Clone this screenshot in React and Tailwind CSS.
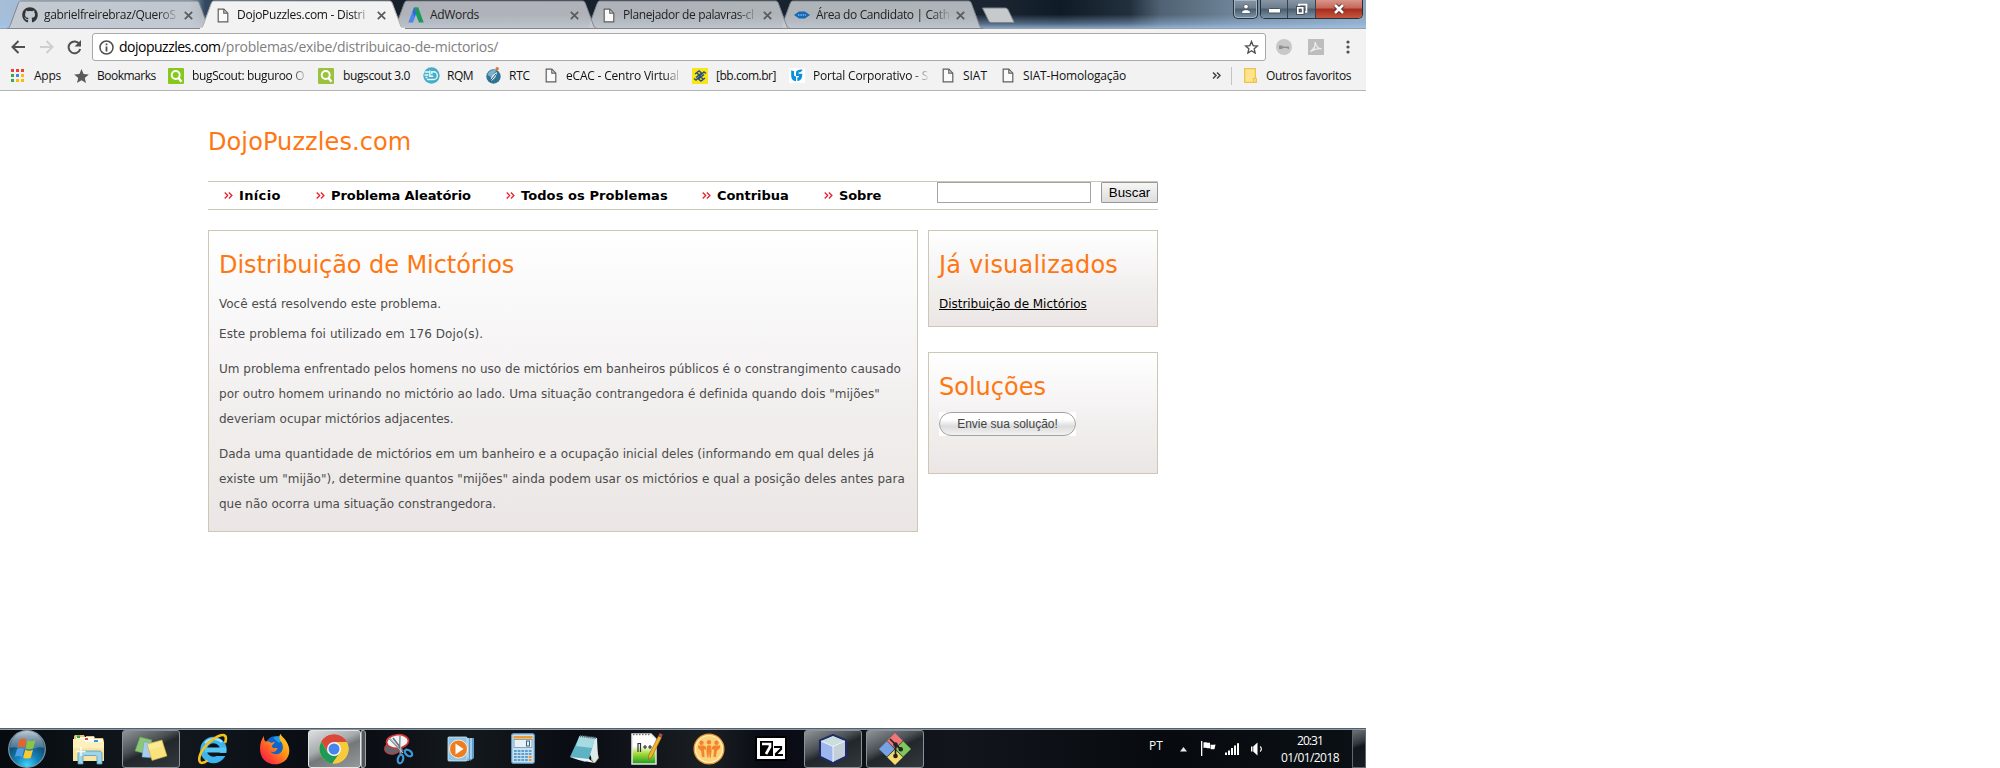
import React from "react";
import { FaGithub } from "react-icons/fa";

/* ---------- small icons ---------- */

function FileIcon() {
  return (
    <svg width="12" height="15" viewBox="0 0 12 15" fill="#fafafa" stroke="#5f5f5f" strokeWidth="1.2">
      <path d="M1.2 1.2h5.6l4 4v8.6H1.2z" />
      <path d="M6.8 1.2v4h4" fill="none" />
    </svg>
  );
}

function AdWordsIcon() {
  return (
    <svg width="16" height="16" viewBox="0 0 16 16">
      <path d="M6 0.5h4.5L5 15.5H0.3z" fill="#4a86ec" />
      <path d="M6 0.5h4.3l5.4 15H11L6.5 4z" fill="#1c9a5c" />
      <path d="M6 0.5 8 6 6.5 10 4.6 4.5z" fill="#3367d6" />
    </svg>
  );
}

function CathoIcon() {
  return (
    <svg width="16" height="10" viewBox="0 0 16 10">
      <path d="M0 5 5 1.4h6L16 5l-5 3.6H5z" fill="#1769b5" />
      <path d="M4 5h8" stroke="#7fb2e2" strokeWidth="1.4" strokeDasharray="1.5 .8" />
    </svg>
  );
}

function CloseX() {
  return (
    <svg width="9" height="9" viewBox="0 0 9 9" stroke="#5a5a5a" strokeWidth="1.7">
      <path d="M.8.8l7.4 7.4M8.2.8.8 8.2" />
    </svg>
  );
}

function AppsIcon() {
  const c = ["#ea4335", "#ea4335", "#ea4335", "#34a853", "#4285f4", "#fbbc05", "#34a853", "#fbbc05", "#fbbc05"];
  return (
    <svg width="13" height="13" viewBox="0 0 13 13">
      {c.map((f, i) => (
        <rect key={i} x={(i % 3) * 5} y={Math.floor(i / 3) * 5} width="3" height="3" fill={f} />
      ))}
    </svg>
  );
}

function StarSolid() {
  return (
    <svg width="15" height="14" viewBox="0 0 24 23" fill="#5a5a5a">
      <path d="M12 0l3.4 8.2 8.6.7-6.6 5.700 2 8.400L12 18.500 4.600 23l2-8.400L0 8.900l8.600-.7z" />
    </svg>
  );
}

function BugScoutIcon({ color }) {
  return (
    <svg width="16" height="16" viewBox="0 0 16 16">
      <rect width="16" height="16" rx="1" fill={color} />
      <circle cx="7.700" cy="7" r="4" fill="none" stroke="#fff" strokeWidth="1.900" />
      <path d="M10.500 10l3 3.700" stroke="#fff" strokeWidth="2.200" />
    </svg>
  );
}

function RqmIcon() {
  return (
    <svg width="17" height="17" viewBox="0 0 17 17">
      <circle cx="8.500" cy="8.500" r="8.200" fill="#45aec6" />
      <path d="M1.500 5h5M1.500 8h4M6.800 3.500v5.800h3.500M4 12.500h6.500a3.300 3.300 0 0 0 0-7.700H8.800v2.500M2.500 10.500h2" fill="none" stroke="#e8fafd" strokeWidth="1.400" />
    </svg>
  );
}

function RtcIcon() {
  return (
    <svg width="16" height="17" viewBox="0 0 16 17">
      <circle cx="7.500" cy="9.500" r="7.200" fill="#2e7496" />
      <path d="M1.500 8a6.500 6.500 0 0 1 9-4.500L5 10z" fill="#7db4cc" />
      <path d="M5 14c-1-4 2-7 6-9-0.500 4-2 7-6 9z" fill="#e4f1f6" />
      <path d="M4 14.500 10 7" stroke="#1b4e6b" strokeWidth="1" />
      <circle cx="11.200" cy="1.800" r="1.700" fill="#e0762c" />
    </svg>
  );
}

function BbIcon() {
  return (
    <svg width="16" height="16" viewBox="0 0 16 16">
      <rect width="16" height="16" fill="#f7e517" />
      <g fill="none" stroke="#30507e" strokeWidth="1.500">
        <path d="M3 6l4-3 2.500 2L4 9.500M13 10l-4 3-2.500-2L12 6.500M7 8.500l5-4.500 2 1.500M9 7.500 4 12l-2-1.500M5 5l6 6" />
      </g>
    </svg>
  );
}

function PortalIcon() {
  return (
    <svg width="16" height="15" viewBox="0 0 16 15">
      <rect width="16" height="15" fill="#fff" />
      <path d="M2.200 2.200 5 3.300v3.500c0 1 .8 1.700 2 1.700v4.700C4 13 2.200 11 2.200 8z" fill="#0a8fdc" />
      <path d="M7 5c0-2.500 2-3.300 6.500-3.500-.5 2-1.500 2.700-4 2.900v1.300h3.800c0 4.500-1.300 7-5 7.300V9.500c1.200-.2 1.700-.8 1.800-1.600H7z" fill="#0a8fdc" />
    </svg>
  );
}

function FolderNote() {
  return (
    <svg width="13" height="15" viewBox="0 0 13 15">
      <path d="M.7.700h10.600v9.600h1v4H.7z" fill="#ffe38d" stroke="#eac54c" strokeWidth="1.300" />
      <path d="M9.500 14v-3.500h2" fill="none" stroke="#eac54c" strokeWidth="1.200" />
    </svg>
  );
}

/* ---------- browser chrome ---------- */

function Tab({ icon, title, active, width, tracking, z }) {
  return (
    <div className={`relative flex h-[29px] w-[193px] shrink-0 items-center ${z}`}>
      <svg className="absolute top-0 left-0 overflow-visible" width="205" height="29" viewBox="0 0 205 29">
        <path
          d="M0 28.500C2 28 2.500 27 3.500 24.500L11 4C12 1.500 12.500 1 14.500 1H189c2 0 2.700.5 3.600 3l7.600 20.500c.9 2.500 1.500 3.500 4 4z"
          fill={active ? "#f2f2f2" : "#c8ccd1"}
          fillOpacity={active ? 1 : 0.86}
          stroke={active ? "#a9adb1" : "#82868c"}
          strokeWidth="1"
        />
        {active && <path d="M0 28.500h205" stroke="#f2f2f2" strokeWidth="1.500" />}
      </svg>
      <div className="relative flex h-[29px] w-full items-center pt-[1px]">
        <div className="ml-[15px] flex w-[16px] justify-center">{icon}</div>
        <div className={`ml-[6px] overflow-hidden text-[12px] leading-[18px] whitespace-nowrap ${active ? "text-[#111]" : "text-[#222]"} ${width} ${tracking}`}>
          {title}
        </div>
        <div className="absolute left-[177px]">
          <CloseX />
        </div>
      </div>
    </div>
  );
}

function TitleBar() {
  return (
    <div className="relative flex h-[29px] bg-[linear-gradient(to_right,#a6bed8_0px,#8da7c4_190px,#34495f_205px,#16202c_400px,#1a2531_1000px,#0f1b27_1060px,#22303d_1130px,#4f6172_1160px,#71879b_1240px,#8ea6bb_1366px)] pl-[7px]">
      <div className="absolute inset-0 bg-[linear-gradient(to_bottom,transparent_50%,rgba(160,195,235,0.45)_82%,rgba(165,200,240,0.85)_100%)]" />
      <div className="absolute inset-x-0 bottom-0 h-px bg-[#9a9fa5]" />
      <Tab z="z-10" icon={<FaGithub size={16} color="#333" />} title="gabrielfreirebraz/QueroS" width="w-[133px] [mask-image:linear-gradient(to_right,black_86%,transparent_102%)]" tracking="tracking-[-0.33px]" />
      <Tab z="z-20" active icon={<FileIcon />} title="DojoPuzzles.com - Distri" width="w-[133px] [mask-image:linear-gradient(to_right,black_86%,transparent_102%)]" tracking="tracking-[-0.27px]" />
      <Tab z="z-[9]" icon={<AdWordsIcon />} title="AdWords" width="w-[133px]" tracking="tracking-[-0.31px]" />
      <Tab z="z-[8]" icon={<FileIcon />} title="Planejador de palavras-cl" width="w-[133px] [mask-image:linear-gradient(to_right,black_86%,transparent_102%)]" tracking="tracking-[-0.38px]" />
      <Tab z="z-[7]" icon={<CathoIcon />} title="Área do Candidato | Cath" width="w-[133px] [mask-image:linear-gradient(to_right,black_86%,transparent_102%)]" tracking="tracking-[-0.38px]" />
      <svg className="relative z-10 mt-[7px] ml-[9px]" width="36" height="17" viewBox="0 0 36 17">
        <path d="M1.500 1h22c2 0 3 .5 3.700 2l6 12.500H11c-2 0-3-.6-3.700-2.500z" fill="#c6cacd" stroke="#7f858b" />
      </svg>
      <div className="absolute top-0 right-[3px] flex h-[19px]">
        <div className="mr-[2px] flex w-[25px] items-center justify-center rounded-b-[5px] border border-t-0 border-[#25323e] bg-[linear-gradient(#8796a4,#6b7c8b_45%,#4b5d6d_50%,#7b93a8)] shadow-[inset_0_0_0_1px_#a5b5c3]">
          <svg width="12" height="12" viewBox="0 0 12 12" fill="#fff" stroke="#3b4650" strokeWidth=".7">
            <circle cx="6" cy="3.600" r="2.300" />
            <path d="M1.500 10.500c0-2.600 1.500-3.800 4.500-3.800s4.500 1.200 4.500 3.800z" />
          </svg>
        </div>
        <div className="flex w-[103px] overflow-hidden rounded-b-[5px] border border-t-0 border-[#25323e] shadow-[inset_0_0_0_1px_#a5b5c3]">
          <div className="flex w-[27px] items-center justify-center border-r border-[#36424d] bg-[linear-gradient(#8796a4,#6b7c8b_45%,#4b5d6d_50%,#7b93a8)]">
            <svg className="mt-[3px]" width="13" height="6" viewBox="0 0 13 6">
              <rect x=".5" y=".5" width="12" height="4.500" rx="1" fill="#fff" stroke="#47525c" />
            </svg>
          </div>
          <div className="flex w-[28px] items-center justify-center border-r border-[#36424d] bg-[linear-gradient(#8796a4,#6b7c8b_45%,#4b5d6d_50%,#7b93a8)]">
            <svg width="13" height="13" viewBox="0 0 13 13" fill="none">
              <path d="M4 3V1.500h7.500V9H10" stroke="#fff" strokeWidth="1.600" />
              <rect x="1.500" y="3.500" width="7.500" height="8" fill="#fff" stroke="#333d47" strokeWidth=".8" />
              <rect x="4" y="6" width="2.500" height="3" fill="#5a6a78" stroke="#333d47" strokeWidth=".6" />
            </svg>
          </div>
          <div className="flex flex-1 items-center justify-center bg-[linear-gradient(#d9958a,#c5665a_45%,#a82b1d_50%,#c4573f)]">
            <svg width="14" height="12" viewBox="0 0 14 12">
              <path d="M3 2l8 8M11 2l-8 8" stroke="#4d2420" strokeWidth="4.400" />
              <path d="M3 2l8 8M11 2l-8 8" stroke="#fff" strokeWidth="2.700" />
            </svg>
          </div>
        </div>
      </div>
    </div>
  );
}

function Toolbar() {
  return (
    <div className="flex h-[32px] items-center bg-[#f2f2f2] pt-[4px]">
      <svg className="ml-[11px]" width="15" height="14" viewBox="0 0 15 14" fill="none" stroke="#505050" strokeWidth="2">
        <path d="M14 7H2M7.500 1 1.500 7l6 6" />
      </svg>
      <svg className="ml-[13px]" width="15" height="14" viewBox="0 0 15 14" fill="none" stroke="#cfcfcf" strokeWidth="2">
        <path d="M1 7h12M7.500 1l6 6-6 6" />
      </svg>
      <svg className="ml-[13px]" width="15" height="15" viewBox="0 0 15 15" fill="none" stroke="#505050" strokeWidth="2">
        <path d="M12.500 4.200A5.900 5.900 0 1 0 13.200 9" />
        <path d="M14 0v6.500H7.600z" fill="#505050" stroke="none" />
      </svg>
      <div className="ml-[10px] flex h-[28px] w-[1174px] items-center rounded-[3px] border border-[#a9a9a9] bg-white">
        <svg className="ml-[6px]" width="15" height="15" viewBox="0 0 15 15" fill="none" stroke="#4f4f4f">
          <circle cx="7.500" cy="7.500" r="6.500" strokeWidth="1.500" />
          <path d="M7.500 6.500V11.500M7.500 3.500V5.200" strokeWidth="1.800" />
        </svg>
        <div className="ml-[5px] flex text-[14px] leading-[20px] whitespace-nowrap">
          <span className="w-[102px] tracking-[-0.5px] text-black">dojopuzzles.com</span>
          <span className="tracking-[-0.27px] text-[#808080]">/problemas/exibe/distribuicao-de-mictorios/</span>
        </div>
        <svg className="mr-[6px] ml-auto" width="15" height="14" viewBox="0 0 24 23" fill="none" stroke="#505050" strokeWidth="2.200">
          <path d="M12 2.500l2.700 6.700 7 .6-5.300 4.700 1.600 7L12 17.700l-6 3.800 1.600-7L2.300 9.800l7-.6z" />
        </svg>
      </div>
      <svg className="ml-[10px]" width="16" height="16" viewBox="0 0 16 16">
        <circle cx="8" cy="8" r="8" fill="#c8c8c8" />
        <path d="M3 6.500h3.500v1H13v2.500h-1.500V9H6.500v1H3z" fill="#8f8f8f" />
      </svg>
      <svg className="ml-[16px]" width="16" height="16" viewBox="0 0 16 16">
        <rect width="16" height="16" fill="#bdbdbd" />
        <path d="M2.500 12.500c3-2 5-6 4.700-9.500.6 4 3 6.500 6.300 6.800-4-.6-7.500.3-11 2.700z" fill="none" stroke="#efefef" strokeWidth="1.300" />
      </svg>
      <svg className="ml-[22px]" width="4" height="14" viewBox="0 0 4 14" fill="#505050">
        <circle cx="2" cy="2" r="1.600" />
        <circle cx="2" cy="7" r="1.600" />
        <circle cx="2" cy="12" r="1.600" />
      </svg>
    </div>
  );
}

function Bookmark({ icon, label, width, text }) {
  return (
    <div className={`flex shrink-0 items-center ${width}`}>
      {icon}
      <span className={`whitespace-nowrap ${text}`}>{label}</span>
    </div>
  );
}

function BookmarksBar() {
  return (
    <div className="flex h-[30px] items-center border-b border-[#b4b4b4] bg-[#f2f2f2] pl-[11px] text-[12px] leading-[18px] text-[#111]">
      <Bookmark width="w-[63px]" icon={<AppsIcon />} label="Apps" text="ml-[10px] tracking-[-0.25px]" />
      <Bookmark width="w-[94px]" icon={<StarSolid />} label="Bookmarks" text="ml-[8px] tracking-[-0.5px]" />
      <Bookmark width="w-[150px]" icon={<BugScoutIcon color="#86c81e" />} label="bugScout: buguroo O" text="ml-[8px] w-[114px] overflow-hidden tracking-[-0.36px] [mask-image:linear-gradient(to_right,black_86%,transparent_102%)]" />
      <Bookmark width="w-[105px]" icon={<BugScoutIcon color="#9ac23c" />} label="bugscout 3.0" text="ml-[9px] tracking-[-0.38px]" />
      <Bookmark width="w-[63px]" icon={<RqmIcon />} label="RQM" text="ml-[7px] tracking-[-0.5px]" />
      <Bookmark width="w-[59px]" icon={<RtcIcon />} label="RTC" text="ml-[7px] tracking-[-0.2px]" />
      <Bookmark width="w-[147px]" icon={<FileIcon />} label="eCAC - Centro Virtual" text="ml-[9px] w-[114px] overflow-hidden tracking-[-0.2px] [mask-image:linear-gradient(to_right,black_86%,transparent_102%)]" />
      <Bookmark width="w-[97px]" icon={<BbIcon />} label="[bb.com.br]" text="ml-[8px] tracking-[-0.47px]" />
      <Bookmark width="w-[153px]" icon={<PortalIcon />} label="Portal Corporativo - S" text="ml-[8px] w-[115px] overflow-hidden tracking-[-0.2px] [mask-image:linear-gradient(to_right,black_86%,transparent_102%)]" />
      <Bookmark width="w-[60px]" icon={<FileIcon />} label="SIAT" text="ml-[9px] tracking-[-0.03px]" />
      <Bookmark width="w-[210px]" icon={<FileIcon />} label="SIAT-Homologação" text="ml-[9px] tracking-[-0.15px]" />
      <div className="flex h-[18px] w-[20px] shrink-0 items-center border-r border-[#c4c4c4]">
        <svg width="9" height="7" viewBox="0 0 9 7" fill="none" stroke="#444" strokeWidth="1.500">
          <path d="M1 .5l3 3-3 3M5 .5l3 3-3 3" />
        </svg>
      </div>
      <Bookmark width="w-[110px]" icon={<span className="ml-[12px]"><FolderNote /></span>} label="Outros favoritos" text="ml-[9px] tracking-[-0.37px]" />
    </div>
  );
}

/* ---------- page ---------- */

function NavItem({ label, width, tracking = "" }) {
  return (
    <a className={`flex shrink-0 items-center ${width}`}>
      <svg className="mr-[6px]" width="9" height="7" viewBox="0 0 9 7" fill="none" stroke="#e8202a" strokeWidth="1.300">
        <path d="M.7.500l3 3-3 3M4.900.500l3 3-3 3" />
      </svg>
      <span className={`whitespace-nowrap ${tracking}`}>{label}</span>
    </a>
  );
}

function Panel({ title, className, children }) {
  return (
    <section className={`border border-[#cdc8b5] bg-[linear-gradient(#ffffff,#f5f3f3_45%,#f1efed_60%,#ebe6e5)] px-[10px] pt-[16px] ${className}`}>
      <h2 className="text-[24px] leading-[36px] text-[#ff7711]">{title}</h2>
      {children}
    </section>
  );
}

function Page() {
  return (
    <main className="flex-1 bg-white pt-[33px] pl-[208px] font-['DejaVu_Sans',Verdana,sans-serif]">
      <div className="w-[950px]">
        <h1 className="text-[24px] leading-[36px] tracking-[0.1px] text-[#ff7711]">DojoPuzzles.com</h1>
        <nav className="mt-[21px] flex h-[29px] border-y border-[#cdc8b5]">
          <div className="flex items-center pl-[16px] text-[13px] leading-[20px] font-bold text-black">
            <NavItem label="Início" width="w-[92px]" tracking="tracking-[0.35px]" />
            <NavItem label="Problema Aleatório" width="w-[190px]" tracking="tracking-[-0.08px]" />
            <NavItem label="Todos os Problemas" width="w-[196px]" tracking="tracking-[0.08px]" />
            <NavItem label="Contribua" width="w-[122px]" tracking="tracking-[-0.05px]" />
            <NavItem label="Sobre" width="w-[80px]" tracking="tracking-[-0.1px]" />
          </div>
          <div className="ml-auto flex h-[21px] font-['Liberation_Sans',Arial,sans-serif]">
            <input className="h-[21px] w-[154px] border border-[#a3a3a3] bg-white" />
            <button className="ml-[10px] h-[21px] w-[57px] rounded-[1px] border border-[#979797] bg-[linear-gradient(#f6f6f6,#dddddd)] text-[13.33px] leading-[19px] text-black">Buscar</button>
          </div>
        </nav>
        <div className="mt-[20px] flex gap-[10px]">
          <Panel title={<span className="tracking-[-0.07px]">Distribuição de Mictórios</span>} className="h-[302px] w-[710px]">
            <div className="text-[12px] leading-[25px] whitespace-nowrap text-[#4c4c4c]">
              <p className="mt-[9px]">Você está resolvendo este problema.</p>
              <p className="mt-[5px] tracking-[0.09px]">Este problema foi utilizado em 176 Dojo(s).</p>
              <p className="mt-[10px]">
                Um problema enfrentado pelos homens no uso de mictórios em banheiros públicos é o constrangimento causado
                <br />
                <span className="tracking-[0.02px]">por outro homem urinando no mictório ao lado. Uma situação contrangedora é definida quando dois "mijões"</span>
                <br />
                deveriam ocupar mictórios adjacentes.
              </p>
              <p className="mt-[10px]">
                <span className="tracking-[0.015px]">Dada uma quantidade de mictórios em um banheiro e a ocupação inicial deles (informando em qual deles já</span>
                <br />
                <span className="tracking-[0.03px]">existe um "mijão"), determine quantos "mijões" ainda podem usar os mictórios e qual a posição deles antes para</span>
                <br />
                <span className="tracking-[-0.02px]">que não ocorra uma situação constrangedora.</span>
              </p>
            </div>
          </Panel>
          <div className="flex w-[230px] flex-col gap-[25px]">
            <Panel title={<span className="tracking-[0.22px]">Já visualizados</span>} className="h-[97px]">
              <a className="mt-[9px] block text-[12px] leading-[25px] tracking-[-0.03px] whitespace-nowrap text-black underline">Distribuição de Mictórios</a>
            </Panel>
            <Panel title="Soluções" className="h-[122px]">
              <div className="mt-[7px] h-[24px] w-[137px] bg-white">
                <button className="block h-[24px] w-[137px] rounded-full border border-[#a2a2a2] bg-[linear-gradient(#ffffff_30%,#dcdcdc_60%,#f2f2f2)] font-['Liberation_Sans',Arial,sans-serif] text-[12px] leading-[22px] text-[#444]">
                  Envie sua solução!
                </button>
              </div>
            </Panel>
          </div>
        </div>
      </div>
    </main>
  );
}

/* ---------- taskbar icons ---------- */

function StartOrb() {
  return (
    <svg width="40" height="40" viewBox="0 0 40 40">
      <defs>
        <radialGradient id="orb" cx=".5" cy=".95" r=".8">
          <stop offset="0" stopColor="#3fd6ff" />
          <stop offset=".4" stopColor="#1682b8" />
          <stop offset="1" stopColor="#0d3554" />
        </radialGradient>
        <linearGradient id="orbShine" x1="0" y1="0" x2="0" y2="1">
          <stop offset="0" stopColor="#dfe8ee" stopOpacity=".85" />
          <stop offset="1" stopColor="#8fa9b8" stopOpacity=".35" />
        </linearGradient>
      </defs>
      <circle cx="20" cy="20" r="18.300" fill="url(#orb)" stroke="#7c97a5" strokeWidth="1.200" />
      <path d="M3 19a17 17 0 0 1 34 0c-8-3-12 4-19 2S8 17 3 19z" fill="url(#orbShine)" />
      <path d="M12.500 10.500c2.500-1.500 4.500-1.300 7 .2l-2 8c-2.500-1.300-4.500-1.500-7 0z" fill="#e8632c" />
      <path d="M20.500 11.200c2.600 1.300 5 1.300 8 0l-2.300 8c-2.700 1.200-5 1.200-7.700 0z" fill="#8cc540" />
      <path d="M10 20c2.500-1.500 4.700-1.300 7.200.2l-2.200 8c-2.500-1.500-4.500-1.700-7.200 0z" fill="#4c9fe0" />
      <path d="M18.200 20.700c2.600 1.300 5 1.400 7.800 0l-2.200 8c-2.800 1.200-5 1.200-7.700 0z" fill="#fcc92f" />
    </svg>
  );
}

function ExplorerIcon() {
  return (
    <svg width="34" height="32" viewBox="0 0 34 32">
      <path d="M2 3 3 2h9l1 2h1v-1h8l1 2h8l1 3v19H2z" fill="#e5c565" />
      <path d="M4 4h8v5H4z" fill="#f7f5e8" />
      <rect x="5" y="2.500" width="3" height="2.500" fill="#2dad3c" />
      <rect x="12" y="4" width="10" height="5" fill="#fafafa" />
      <rect x="13" y="5" width="3" height="2" fill="#d44a38" />
      <rect x="21" y="6" width="10" height="4" fill="#fafafa" />
      <rect x="22" y="7" width="4" height="2" fill="#2b9ae4" />
      <path d="M1 6h10l2 3h19v19H1z" fill="#f9e5a0" />
      <path d="M1 6h10l2 3h19v6H1z" fill="#fdf0bd" />
      <path d="M6 31V21c0-2 1-3 3-3h18c2 0 3 1 3 3v10h-5v-7c0-1-1-1.500-2-1.500H13c-1.500 0-2 .5-2 1.500v7z" fill="#9fd4ea" stroke="#5199bb" strokeWidth=".8" />
      <path d="M9 14v9M4.500 18.500h9" stroke="#fff" strokeWidth="1.500" opacity=".9" />
    </svg>
  );
}

function StickyIcon() {
  return (
    <svg width="34" height="26" viewBox="0 0 34 26">
      <path d="M6 1l12 3-5 14L1 15z" fill="#8cc773" stroke="#619c4c" strokeWidth=".5" />
      <path d="M10 6l12 1-1 15-13-1z" fill="#a5cdf4" stroke="#6c9ccc" strokeWidth=".5" />
      <path d="M13 8l15-4 5 16-15 4.500z" fill="#fae27d" stroke="#c5a83c" strokeWidth=".6" />
      <path d="M14 9l13-3.500 1.500 5L15.500 14z" fill="#fff0a8" opacity=".6" />
    </svg>
  );
}

function IeIcon() {
  return (
    <svg width="32" height="32" viewBox="0 0 32 32">
      <circle cx="16.500" cy="17" r="10" fill="none" stroke="#3cb4ee" strokeWidth="6.500" />
      <path d="M8 17h21" stroke="#5ac6f5" strokeWidth="5" />
      <path d="M20 20h10v3H20z" fill="#0a1018" />
      <path d="M13.500 14c.8-3 6-3 7 0z" fill="#0a1018" />
      <path d="M8 10a12 12 0 0 1 17-1" fill="none" stroke="#a7e4ff" strokeWidth="2" />
      <path d="M28 10c3-9-2-10-10-5C8 11 1 22 2.500 28c.8 3 4.500 2 8-.5" fill="none" stroke="#f4c21c" strokeWidth="2.600" />
    </svg>
  );
}

function FirefoxIcon() {
  return (
    <svg width="32" height="32" viewBox="0 0 32 32">
      <defs>
        <linearGradient id="ffx" x1="1" y1="0" x2="0" y2="1">
          <stop offset="0" stopColor="#ffe22e" />
          <stop offset=".4" stopColor="#ff9417" />
          <stop offset=".75" stopColor="#ff3b34" />
          <stop offset="1" stopColor="#d8155f" />
        </linearGradient>
      </defs>
      <circle cx="17" cy="14" r="11" fill="#1165c9" />
      <path d="M14 5c4-3 9-2 11 1l-5 4z" fill="#1d9ee6" />
      <path d="M5 3c0 3 0 4 1.500 5.500C9 8 11 9 12 10c2-1 4-1 4-1-1 2-4 3-3 5 1 1.500 4 1 5.500 1-1 4-4 4.500-7 3.500 3 4 10 4 12-2 1-4-.5-7-2.500-9C20 5 20 3 21.500.800c1 3 4 4 6 8C32 16 31 24 25 28.500 18 33.500 8 31.500 3.500 25-.5 18 .5 9 5 3z" fill="url(#ffx)" />
    </svg>
  );
}

function ChromeIcon() {
  return (
    <svg width="30" height="30" viewBox="0 0 30 30">
      <circle cx="15" cy="15" r="14.500" fill="#f6ca3b" />
      <path d="M15 15 2.400 7.800A14.500 14.500 0 0 1 27.700 8z" fill="#d9483b" />
      <path d="M15 8h12.700a14.500 14.500 0 0 0-13-7.500A14.500 14.500 0 0 0 2.400 7.800L9 18.500z" fill="#d9483b" />
      <path d="M2.400 7.800 9 19l6 3-1.700 7.400A14.500 14.500 0 0 1 2.400 7.800z" fill="#1d9a56" />
      <path d="M9 18.600c2 4 7 4.500 11 1.400l-6.700 9.400z" fill="#1d9a56" />
      <path d="M21 18.500 13.300 29.400A14.500 14.500 0 0 0 27.700 8H15z" fill="#f6ca3b" />
      <circle cx="15" cy="15" r="7" fill="#f6f6f6" />
      <circle cx="15" cy="15" r="5.500" fill="#4585ee" />
    </svg>
  );
}

function SnipIcon() {
  return (
    <svg width="32" height="32" viewBox="0 0 32 32">
      <ellipse cx="10" cy="15" rx="8.500" ry="6" transform="rotate(-12 10 15)" fill="#5f676e" stroke="#c43d3d" strokeWidth="1.200" />
      <ellipse cx="14.500" cy="8.500" rx="11" ry="6.800" transform="rotate(-6 14.500 8.500)" fill="#f3f5f6" stroke="#d03434" strokeWidth="1.700" />
      <path d="M6 5l14 15M17 3l0 18M10 5l10 13" stroke="#68737c" strokeWidth="1.600" />
      <path d="M6 5l14 15M17 3l1 18" stroke="#d6dce0" strokeWidth=".7" />
      <ellipse cx="25.500" cy="20" rx="4.200" ry="2.600" transform="rotate(38 25.500 20)" fill="none" stroke="#3d9ad8" strokeWidth="2.200" />
      <ellipse cx="17.500" cy="26" rx="2.600" ry="4.300" transform="rotate(15 17.500 26)" fill="none" stroke="#3d9ad8" strokeWidth="2.200" />
    </svg>
  );
}

function MediaIcon() {
  return (
    <svg width="28" height="28" viewBox="0 0 28 28">
      <path d="M7 3h20v20l-4 3z" fill="#5b9ecb" />
      <path d="M21 3v23M24 3v21" stroke="#cbe6f5" strokeWidth="1.300" />
      <rect x="1" y="2" width="19" height="24" rx="1" fill="#8fc4e3" stroke="#d2eaf6" strokeWidth=".8" />
      <circle cx="11.500" cy="14" r="9" fill="#ef7d1d" stroke="#fff" strokeWidth=".8" />
      <path d="M8.500 8.500v11l8-5.500z" fill="#fff" />
    </svg>
  );
}

function CalcIcon() {
  return (
    <svg width="24" height="31" viewBox="0 0 24 31">
      <rect x=".8" y=".8" width="22.400" height="29.400" rx="1.500" fill="#c8e1f2" stroke="#6da6ce" strokeWidth="1.200" />
      <rect x="2.500" y="3" width="19" height="2.500" fill="#f39a2b" />
      <rect x="3" y="6.500" width="18" height="8" fill="#e8f1f3" stroke="#6e96ae" strokeWidth=".8" />
      <rect x="15.500" y="8" width="3" height="5" fill="none" stroke="#3f627b" strokeWidth="1" />
      {[0, 1, 2, 3].map((r) =>
        [0, 1, 2, 3, 4].map((c) => (
          <rect key={`${r}${c}`} x={3 + c * 3.7} y={17 + r * 3} width="2.700" height="2" fill={c === 4 && r > 1 ? "#ef922a" : "#5e9cc9"} />
        ))
      )}
    </svg>
  );
}

function NotepadIcon() {
  return (
    <svg width="32" height="30" viewBox="0 0 32 30">
      <path d="M25 4l5 20-4 5-4-3z" fill="#c2ab79" />
      <path d="M12 2l16 2 1 20-4 5z" fill="#dcecec" />
      <path d="M10.500 2 26 4 20 25l-4 3L1 23z" fill="#5fb1c4" />
      <path d="M10.500 2 26 4l-3 10-16-2z" fill="#a6dbe4" />
      <path d="M1 23l19 2 5.500 4L10 26z" fill="#eaf4f5" />
      <path d="M11 2l16 2" stroke="#5c686b" strokeWidth="2.200" strokeDasharray="1.200 .9" />
    </svg>
  );
}

function NppIcon() {
  return (
    <svg width="32" height="33" viewBox="0 0 32 33">
      <defs>
        <linearGradient id="npp" x1="0" y1="0" x2="0" y2="1">
          <stop offset=".4" stopColor="#fff" />
          <stop offset=".65" stopColor="#a8dc3c" />
          <stop offset="1" stopColor="#199a1c" />
        </linearGradient>
      </defs>
      <path d="M1 2h19l5 5v25H1z" fill="url(#npp)" stroke="#e6e6e6" strokeWidth="1.500" />
      <path d="M2 2.500h18" stroke="#777" strokeWidth="1.500" strokeDasharray="1.500 1.500" />
      <path d="M7 20v-8.500h2.500V20M12 15h4M14 13v4M17 15h4M19 13v4" fill="none" stroke="#333" strokeWidth="1.200" />
      <path d="M27.500 4l3 1.500-9.500 19-3.500 3 .3-4.500z" fill="#f2b62c" stroke="#8f611b" strokeWidth=".6" />
      <path d="M28.700 1l3 1.500-1.300 3-3-1.500z" fill="#a64e50" />
    </svg>
  );
}

function PeopleIcon() {
  return (
    <svg width="32" height="32" viewBox="0 0 32 32">
      <circle cx="16" cy="16" r="14.800" fill="#fbd37b" stroke="#f19a33" strokeWidth="1.500" />
      <circle cx="16" cy="16" r="13.500" fill="none" stroke="#fff0c5" strokeWidth="1.200" />
      <g fill="#f4822f">
        <circle cx="8.500" cy="9.800" r="2.200" />
        <circle cx="16" cy="9.300" r="2.200" />
        <circle cx="23.500" cy="9.800" r="2.200" />
        <path d="M5 12.500h6l2 1.500v2.500h-2L11.500 24H9l-.8-6-3.200-3zM14 12.500h4l.6 5-.8 7h-1.200l-.6-6-.6 6h-1.200l-.8-7zM27 12.500h-6L19 14v2.500h2l-.5 7.500H23l.8-6 3.200-3z" />
      </g>
    </svg>
  );
}

function SevenZipIcon() {
  return (
    <svg width="32" height="25" viewBox="0 0 32 25">
      <rect width="32" height="25" fill="#000" />
      <rect x="2" y="2" width="28" height="21" fill="#fff" />
      <rect x="5" y="5" width="13" height="15" fill="#000" />
      <path d="M7 8h8v3l-4 7" fill="none" stroke="#fff" strokeWidth="2.700" />
      <path d="M19 11h7v2l-5 5v1h7" fill="none" stroke="#000" strokeWidth="2.200" />
    </svg>
  );
}

function CubeIcon() {
  return (
    <svg width="32" height="32" viewBox="0 0 32 32">
      <path d="M16 2l13 5.500v16L16 30 3 23.500v-16z" fill="#8ea6d9" stroke="#202a68" strokeWidth="2.200" strokeLinejoin="round" />
      <path d="M16 3l12 5-12 5.500L4 8z" fill="#c9dfdc" />
      <path d="M4 8l12 5.500v15.300L4 23z" fill="#9db7ee" />
      <path d="M28 8l-12 5.500v15.300L28 23z" fill="#c5cfd9" />
      <path d="M4 8l12 5.500L28 8M16 13.500V29" fill="none" stroke="#edf6fb" strokeWidth="1" />
    </svg>
  );
}

function GitIcon() {
  return (
    <svg width="34" height="34" viewBox="0 0 34 34">
      <path d="M17 1l7.800 7.800L17 16.600 9.200 8.800z" fill="#ee7676" />
      <path d="M25.200 9.200l7.800 7.800-7.800 7.800-7.800-7.800z" fill="#7fc65c" />
      <path d="M8.800 9.200l7.800 7.800-7.800 7.800L1 17z" fill="#75a3e6" />
      <path d="M17 17.400l7.800 7.800L17 33l-7.800-7.800z" fill="#f5da6c" />
      <path d="M12 7l5.500 5.500V24M17.500 12.500l5 4.500" stroke="#222" strokeWidth="1.700" fill="none" />
      <circle cx="17.500" cy="12.500" r="2.200" fill="#222" />
      <circle cx="17.500" cy="24" r="2.300" fill="#222" />
      <circle cx="22.800" cy="17.300" r="2.200" fill="#222" />
    </svg>
  );
}

const RUNNING =
  "rounded-[3px] border border-[#8b9197] bg-[linear-gradient(155deg,#8f9499_0%,#4b5055_38%,#22272c_52%,#33383d_100%)]";

function Slot({ children, running }) {
  return (
    <div className="flex h-[40px] w-[62px] shrink-0 items-center justify-center">
      <div className={`flex h-[38px] w-[58px] items-center justify-center ${running ? RUNNING : ""}`}>{children}</div>
    </div>
  );
}

function Taskbar() {
  return (
    <footer className="flex h-[40px] items-center border-t border-[#52616d] bg-[linear-gradient(90deg,#070b10,#12181e_12%,#080b11_25%,#14191e_34%,#090c12_42%,#1a1f24_52%,#080b13_56%,#12161c_70%,#070b10_85%,#0b1015)] shadow-[inset_0_1px_0_#8d99a2]">
      <div className="flex w-[58px] shrink-0 items-center pl-[7px]"><StartOrb /></div>
      <Slot><ExplorerIcon /></Slot>
      <Slot running><StickyIcon /></Slot>
      <Slot><IeIcon /></Slot>
      <Slot><FirefoxIcon /></Slot>
      <div className="flex h-[40px] w-[62px] shrink-0 items-center pl-[2px]">
        <div className="flex h-[38px] w-[53px] items-center justify-center rounded-[3px] border border-[#e3e5e6] bg-[linear-gradient(155deg,#dcdede_0%,#a9acae_40%,#73787b_55%,#96999b_100%)] pr-[1px]">
          <ChromeIcon />
        </div>
        <div className="h-[38px] w-[5px] rounded-r-[3px] border border-[#a0a4a6] bg-[#51565a]" />
      </div>
      <Slot><SnipIcon /></Slot>
      <Slot><MediaIcon /></Slot>
      <Slot><CalcIcon /></Slot>
      <Slot><NotepadIcon /></Slot>
      <Slot><NppIcon /></Slot>
      <Slot><PeopleIcon /></Slot>
      <Slot><SevenZipIcon /></Slot>
      <Slot running><CubeIcon /></Slot>
      <Slot running><GitIcon /></Slot>
      <div className="ml-auto flex h-[39px] items-center text-[12px] leading-[17px] text-white">
        <span className="mb-[6px] w-[31px]">PT</span>
        <svg className="mt-[1px] w-[7px]" width="7" height="5" viewBox="0 0 7 5"><path d="M3.500 0 7 4.500H0z" fill="#e8e8e8" /></svg>
        <svg className="ml-[14px]" width="15" height="15" viewBox="0 0 15 15" fill="#fff">
          <rect x="0" y="0" width="1.300" height="15" />
          <path d="M2.500 1.500c3-1 3 .7 6.500.2v5.500c-3.500.5-3.500-1-6.500-.2zM9.500 3.500c2 .6 3 0 5 0l-1 4.500c-1.500.5-2.500.3-4 0z" />
        </svg>
        <svg className="ml-[9px]" width="15" height="12" viewBox="0 0 15 12" fill="#fff">
          <path d="M0 9.500h2V12H0zM3 7.500h2V12H3zM6 5h2v7H6zM9 2.500h2V12H9zM12 .3h2V12h-2z" />
        </svg>
        <svg className="ml-[11px]" width="12" height="14" viewBox="0 0 12 14">
          <path d="M0 4.500h1.500v5H0zM2.200 4.500 6.500.500v13L2.200 9.500z" fill="#fff" />
          <path d="M9.200 4.500c1.400 1.500 1.400 3.500 0 5" fill="none" stroke="#fff" strokeWidth="1.100" />
        </svg>
        <div className="mr-[2px] ml-[7px] w-[80px] text-center">
          <div className="tracking-[-0.9px]">20:31</div>
          <div className="tracking-[-0.57px]">01/01/2018</div>
        </div>
        <div className="h-[38px] w-[14px] border border-[#60676e] bg-[linear-gradient(160deg,#6a7076_0%,#30363c_35%,#12171c_45%,#171c22_100%)]" />
      </div>
    </footer>
  );
}

export default function App() {
  return (
    <div className="h-[768px] w-[2000px] overflow-hidden bg-white">
      <div className="flex h-[768px] w-[1366px] flex-col overflow-hidden font-['Open_Sans','Noto_Sans',sans-serif]">
        <TitleBar />
        <Toolbar />
        <BookmarksBar />
        <Page />
        <Taskbar />
      </div>
    </div>
  );
}
